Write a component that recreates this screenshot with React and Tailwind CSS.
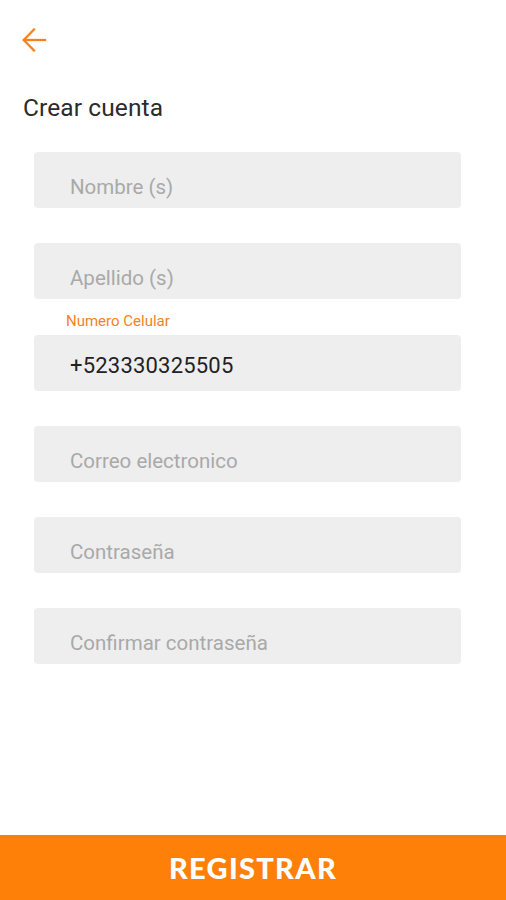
import React from "react";

const fields = [
  { placeholder: "Nombre (s)" },
  { placeholder: "Apellido (s)" },
  { value: "+523330325505", label: "Numero Celular" },
  { placeholder: "Correo electronico" },
  { placeholder: "Contraseña" },
  { placeholder: "Confirmar contraseña" },
];

export default function App() {
  return (
    <div className="w-[506px] h-[900px] bg-white flex flex-col font-['Roboto',sans-serif]">
      <div className="flex-1 flex flex-col">
        <div className="pl-[22px] pt-[28px] h-[52px]">
          <svg width="25" height="24" viewBox="0 0 25 24" fill="none" stroke="#f5821f" strokeWidth="2.3" strokeLinecap="square">
            <path d="M2 12 H23" />
            <path d="M12 1.5 L1.8 12 L12 22.5" />
          </svg>
        </div>
        <div className="pl-[23px] mt-[42px] text-[24.5px] leading-[28px] text-[#2b2b2b] tracking-[0.1px]">
          Crear cuenta
        </div>
        <div className="flex flex-col pl-[34px] pr-[45px] mt-[30px] gap-[35.3px]">
          {fields.map((f, i) => (
            <div key={i} className="relative">
              {f.label && (
                <div className="absolute left-[32px] top-[-23px] text-[15px] leading-[18px] text-[#f5821f]">
                  {f.label}
                </div>
              )}
              <div className="h-[56px] rounded-[4px] bg-[#eeeeee] pl-[36px] pt-[18px]">
                {f.value ? (
                  <div className="text-[22px] leading-[26px] text-[#222222] tracking-[0.2px]">{f.value}</div>
                ) : (
                  <div className="pt-[1px] text-[20.5px] leading-[32px] text-[#a9a9a9]">{f.placeholder}</div>
                )}
              </div>
            </div>
          ))}
        </div>
      </div>
      <div className="h-[65px] bg-[#ff8008] flex items-center justify-center">
        <span className="text-white text-[29px] font-black tracking-[1.3px] font-['Lato',sans-serif]">REGISTRAR</span>
      </div>
    </div>
  );
}
